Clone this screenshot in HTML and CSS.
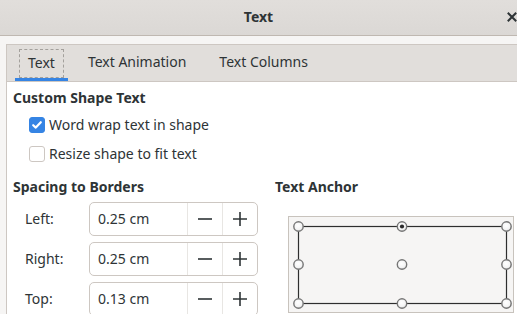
FILE: index.html
```html
<!DOCTYPE html>
<html>
<head>
<meta charset="utf-8">
<link rel="stylesheet" href="styles.css">
</head>
<body>
<div class="window">
  <header class="titlebar">
    <span class="title">Text</span>
    <button class="close" aria-label="Close">
      <svg width="10" height="10" viewBox="0 0 10 10"><path d="M1.5 1.5 L8.5 8.5 M8.5 1.5 L1.5 8.5" stroke="#2e3436" stroke-width="2" stroke-linecap="square"/></svg>
    </button>
  </header>
  <div class="dialog">
    <div class="notebook">
      <div class="tabs">
        <div class="tab active"><span class="focus">Text</span></div>
        <div class="tab"><span class="lbl">Text Animation</span></div>
        <div class="tab"><span class="lbl">Text Columns</span></div>
      </div>
      <div class="page">
        <div class="heading">Custom Shape Text</div>
        <label class="check-row">
          <span class="checkbox checked">
            <svg width="12" height="12" viewBox="0 0 12 12"><path d="M2.2 6.2 L4.8 8.6 L9.8 3.2" fill="none" stroke="#fff" stroke-width="2.2" stroke-linecap="round" stroke-linejoin="round"/></svg>
          </span>
          <span>Word wrap text in shape</span>
        </label>
        <label class="check-row">
          <span class="checkbox"></span>
          <span>Resize shape to fit text</span>
        </label>
        <div class="lower">
          <div class="col">
            <div class="heading h2">Spacing to Borders</div>
            <div class="spin-row">
              <span class="spin-label">Left:</span>
              <div class="spin"><span class="spin-value">0.25 cm</span><span class="spin-btn"><svg width="16" height="16" viewBox="0 0 16 16"><path d="M1 8 H15" stroke="#2e3436" stroke-width="1.6"/></svg></span><span class="spin-btn"><svg width="16" height="16" viewBox="0 0 16 16"><path d="M1 8 H15 M8 1 V15" stroke="#2e3436" stroke-width="1.6"/></svg></span></div>
            </div>
            <div class="spin-row">
              <span class="spin-label">Right:</span>
              <div class="spin"><span class="spin-value">0.25 cm</span><span class="spin-btn"><svg width="16" height="16" viewBox="0 0 16 16"><path d="M1 8 H15" stroke="#2e3436" stroke-width="1.6"/></svg></span><span class="spin-btn"><svg width="16" height="16" viewBox="0 0 16 16"><path d="M1 8 H15 M8 1 V15" stroke="#2e3436" stroke-width="1.6"/></svg></span></div>
            </div>
            <div class="spin-row">
              <span class="spin-label">Top:</span>
              <div class="spin"><span class="spin-value">0.13 cm</span><span class="spin-btn"><svg width="16" height="16" viewBox="0 0 16 16"><path d="M1 8 H15" stroke="#2e3436" stroke-width="1.6"/></svg></span><span class="spin-btn"><svg width="16" height="16" viewBox="0 0 16 16"><path d="M1 8 H15 M8 1 V15" stroke="#2e3436" stroke-width="1.6"/></svg></span></div>
            </div>
          </div>
          <div class="col">
            <div class="heading h2">Text Anchor</div>
            <div class="anchor">
              <svg width="226" height="97" viewBox="0 0 226 97">
                <defs>
                  <radialGradient id="knob" cx="0.45" cy="0.4" r="0.6">
                    <stop offset="0" stop-color="#ffffff"/>
                    <stop offset="0.7" stop-color="#f4f4f4"/>
                    <stop offset="1" stop-color="#d6d6d6"/>
                  </radialGradient>
                </defs>
                <rect x="10.5" y="10.5" width="208" height="77" fill="none" stroke="#2e2e2e" stroke-width="1.2"/>
                <g fill="url(#knob)" stroke="#767676" stroke-width="1.4">
                  <circle cx="10.5" cy="10.5" r="4.7"/>
                  <circle cx="114" cy="10.5" r="4.7"/>
                  <circle cx="218.5" cy="10.5" r="4.7"/>
                  <circle cx="10.5" cy="48.5" r="4.7"/>
                  <circle cx="114" cy="48.5" r="4.7"/>
                  <circle cx="218.5" cy="48.5" r="4.7"/>
                  <circle cx="10.5" cy="87.5" r="4.7"/>
                  <circle cx="114" cy="87.5" r="4.7"/>
                  <circle cx="218.5" cy="87.5" r="4.7"/>
                </g>
                <circle cx="114" cy="10.5" r="2.1" fill="#2a2a2a"/>
              </svg>
            </div>
          </div>
        </div>
      </div>
    </div>
  </div>
</div>
</body>
</html>
```

FILE: styles.css
```css
* { box-sizing: border-box; }
html, body {
  margin: 0;
  padding: 0;
}
body {
  width: 517px;
  height: 314px;
  overflow: hidden;
  background: #f6f5f4;
  font-family: "Noto Sans", "DejaVu Sans", sans-serif;
  font-size: 14px;
  color: #2e3436;
}
.window {
  width: 517px;
  height: 314px;
  display: flex;
  flex-direction: column;
}
.titlebar {
  height: 36px;
  flex: none;
  background: linear-gradient(#e1dedb, #dbd8d5);
  border-bottom: 1px solid #bfb8b1;
  display: flex;
  align-items: center;
  justify-content: center;
  position: relative;
}
.title {
  font-weight: bold;
  font-size: 14px;
  color: #2e3436;
  margin-top: -2px;
}
.close {
  position: absolute;
  right: 0;
  top: 12px;
  width: 10px;
  height: 10px;
  padding: 0;
  border: none;
  background: none;
  display: flex;
  align-items: center;
  justify-content: center;
}
.dialog {
  flex: 1;
  padding: 8px 0 0 6px;
  display: flex;
}
.notebook {
  flex: 1;
  border: 1px solid #cdc7c2;
  border-right: none;
  border-bottom: none;
  background: #ffffff;
  display: flex;
  flex-direction: column;
}
.tabs {
  height: 37px;
  flex: none;
  background: #e1dedb;
  border-bottom: 1px solid #cdc7c2;
  display: flex;
  padding-left: 8px;
  gap: 7px;
}
.tab {
  height: 36px;
  padding: 0 13px;
  display: flex;
  align-items: center;
  color: #2e3436;
}
.tab.active {
  padding: 0 4px;
  box-shadow: inset 0 -3px 0 #3584e4;
}
.tab .focus {
  border: 1px dashed #a3a09c;
  padding: 3px 8px 4px;
  line-height: 20px;
  margin-top: 1px;
}
.tab .lbl {
  line-height: 20px;
  padding-bottom: 2px;
}
.page {
  flex: 1;
  padding: 6px 0 0 6px;
  display: flex;
  flex-direction: column;
}
.heading {
  font-weight: bold;
  line-height: 20px;
  color: #2e3436;
}
.check-row {
  height: 29px;
  display: flex;
  align-items: center;
  gap: 4px;
  padding-left: 16px;
}
.check-row:first-of-type { margin-top: 2px; }
.checkbox {
  width: 16px;
  height: 16px;
  border: 1px solid #cdc7c2;
  border-radius: 3px;
  background: #fff;
  display: flex;
  align-items: center;
  justify-content: center;
}
.checkbox.checked {
  background: #3584e4;
  border-color: #3584e4;
}
.lower {
  display: grid;
  grid-template-columns: 262px 1fr;
  margin-top: 9px;
}
.col {
  display: flex;
  flex-direction: column;
}
.spin-row {
  display: flex;
  align-items: center;
  margin-top: 4px;
  height: 35px;
}
.spin-row + .spin-row { margin-top: 5px; }
.spin-label {
  width: 76px;
  padding-left: 12px;
}
.spin {
  width: 169px;
  height: 34px;
  border: 1px solid #cdc7c2;
  border-radius: 5px;
  display: flex;
  align-items: stretch;
  background: #fff;
}
.spin-value {
  width: 97px;
  padding-left: 8px;
  display: flex;
  align-items: center;
}
.spin-btn {
  width: 35px;
  border-left: 1px solid #e8e6e3;
  display: flex;
  align-items: center;
  justify-content: center;
}
.anchor {
  margin: 19px 0 0 13px;
  width: 226px;
  height: 97px;
  background: #f6f5f4;
  border: 1px solid #c8c3bd;
  position: relative;
}
.anchor svg {
  position: absolute;
  left: -1px;
  top: -1px;
}
```
